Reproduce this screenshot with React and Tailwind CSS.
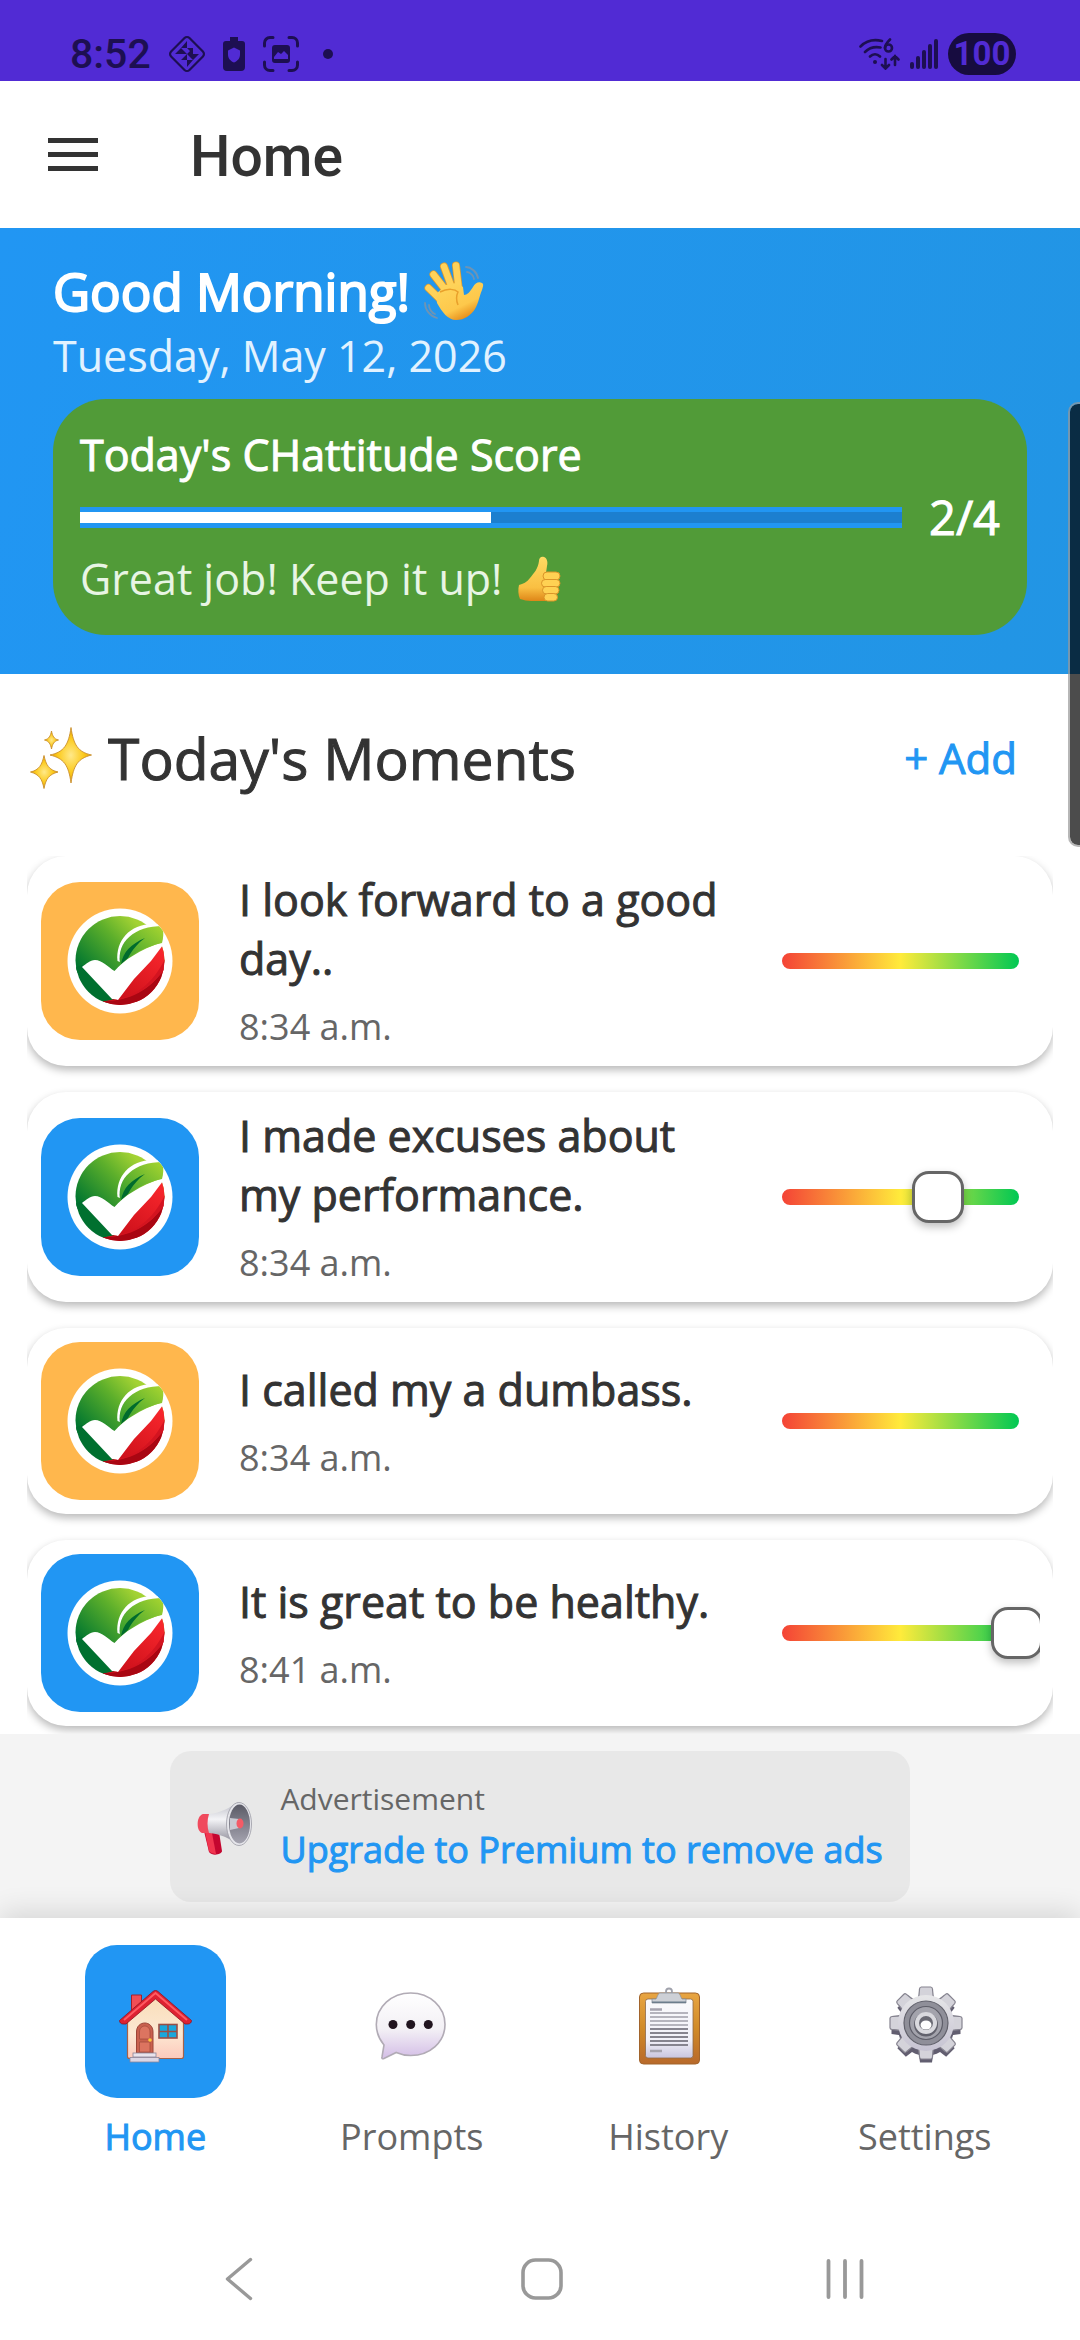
import React, { useState } from 'react';

const INITIAL_MOMENTS = [
  { id: 1, text: 'I look forward to a good day..', time: '8:34 a.m.', tile: 'bg-[#FFB74D]', rating: null },
  { id: 2, text: 'I made excuses about my performance.', time: '8:34 a.m.', tile: 'bg-[#2196F3]', rating: 66 },
  { id: 3, text: 'I called my a dumbass.', time: '8:34 a.m.', tile: 'bg-[#FFB74D]', rating: null },
  { id: 4, text: 'It is great to be healthy.', time: '8:41 a.m.', tile: 'bg-[#2196F3]', rating: 99 },
];

// --- Status bar ---

const StatusBar = () => (
  <div className="h-[81px] pt-[26px] pl-[70px] pr-16 bg-[#512BD4] flex items-center justify-between text-[#1D0F52]">
    <div className="flex items-center">
      <span className="font-['Roboto',sans-serif] font-medium text-[41px] leading-[48px]">8:52</span>
      <svg className="ml-[17px]" width="38" height="38" viewBox="0 0 38 38" fill="none" stroke="currentColor">
        <rect x="6" y="6" width="26" height="26" rx="3.500" strokeWidth="2.200" transform="rotate(45 19 19)" />
        <g fill="currentColor" stroke="none">
          <path d="M19 6v7h-6zM19 13h6v6zM13 13l6 6h-6zM7 19h6v-6zM25 13v6l-6 0zM31 19h-6v6zM19 19v6h-6zM19 25h6l-6 7zM25 19v6l-6-6z" />
        </g>
      </svg>
      <svg className="ml-[17px]" width="22" height="34" viewBox="0 0 22 34" fill="currentColor">
        <path fillRule="evenodd" d="M7 0h8v4h4a3 3 0 0 1 3 3v23a4 4 0 0 1-4 4H4a4 4 0 0 1-4-4V7a3 3 0 0 1 3-3h4zM11 10.500l-6 3v4c0 4 2.500 6.500 6 8 3.500-1.500 6-4 6-8v-4z" />
      </svg>
      <svg className="ml-[18px]" width="36" height="36" viewBox="0 0 36 36" fill="none" stroke="currentColor" strokeWidth="3">
        <path d="M1.500 10V7a5.500 5.500 0 0 1 5.500-5.500h3M26 1.500h3A5.500 5.500 0 0 1 34.500 7v3M34.500 26v3a5.500 5.500 0 0 1-5.500 5.500h-3M10 34.500H7A5.500 5.500 0 0 1 1.500 29v-3" strokeLinecap="round" />
        <path d="M12 9h12a3 3 0 0 1 3 3v12a3 3 0 0 1-3 3H12a3 3 0 0 1-3-3V12a3 3 0 0 1 3-3zm-1 14h14v-4l-4-4-3 3-3-2-4 5z" fill="currentColor" stroke="none" fillRule="evenodd" />
      </svg>
      <span className="ml-6 w-[10px] h-[10px] rounded-full bg-current" />
    </div>
    <div className="flex items-center gap-[10px]">
      <svg width="41" height="32" viewBox="0 0 41 32" fill="none" stroke="currentColor" strokeWidth="2.600" strokeLinecap="round">
        <path d="M1.500 8.500C7 3 15 1 23 3M6 14c4.500-4.500 10-5.500 15.500-4.500M11 18.500c3-3 7-3 10 0" />
        <circle cx="16" cy="24" r="2" fill="currentColor" stroke="none" />
        <path d="M31 1.500c-3 3-5 5.500-5 8.500" />
        <circle cx="29.500" cy="10" r="3.500" />
        <path d="M26.500 21v9M23 27l3.500 3.500L30 27M36 27v-9M32.500 21.500L36 18l3.500 3.500" />
      </svg>
      <svg width="28" height="32" viewBox="0 0 28 32" fill="currentColor">
        <rect x="0" y="24" width="4" height="7" rx="2" />
        <rect x="6" y="18" width="4" height="13" rx="2" />
        <rect x="12" y="12" width="4" height="19" rx="2" />
        <rect x="18" y="6" width="4" height="25" rx="2" />
        <rect x="24" y="1" width="4" height="30" rx="2" />
      </svg>
      <span className="w-[68px] h-[42px] rounded-full bg-[#170C40] text-[#512BD4] flex items-center justify-center font-['Roboto',sans-serif] font-bold text-[33px] leading-[42px]">100</span>
    </div>
  </div>
);

// --- Emoji drawings ---

const WaveIcon = () => (
  <svg width="60" height="60" viewBox="0 0 60 60" fill="none" aria-hidden="true">
    <defs>
      <linearGradient id="hand" x1="0" y1="0" x2="0.600" y2="1">
        <stop offset="0" stopColor="#FFD75E" />
        <stop offset="0.700" stopColor="#FDC84B" />
        <stop offset="1" stopColor="#E58A17" />
      </linearGradient>
    </defs>
    <g stroke="#DE9A2C" strokeWidth="8" strokeLinecap="round">
      <path d="M4.500 27L22 44M9.500 13.500L27 36M20 5.500L29 30M32 4.500L35 30" />
    </g>
    <g stroke="#FFD25A" strokeWidth="6.500" strokeLinecap="round">
      <path d="M4.500 27L22 44M9.500 13.500L27 36M20 5.500L29 30M32 4.500L35 30" />
    </g>
    <path d="M12 33L22 24l10-2 7 4 1 8c3 0 6-3 9-8 2-4 6-6 9-4 2 1 1 4 0 7-3 7-3 12-7 19-4 6-10 11-19 11-8 0-14-8-19-17z" fill="url(#hand)" />
    <path d="M16 31c8-4 15-3 18 0-2 4-2 8 0 13" stroke="#E9A02B" strokeWidth="1.500" />
    <path d="M42 6c5 0 11 5 12 11M43 11c3 0 7 4 7 7M1 42c0 7 5 13 12 15M5 44c0 4 3 8 6 9" stroke="#6E94B4" strokeWidth="1.800" strokeLinecap="round" />
  </svg>
);

const ThumbIcon = () => (
  <svg width="43" height="46" viewBox="0 0 43 46" fill="none" aria-hidden="true">
    <defs>
      <linearGradient id="thumb" x1="0" y1="0" x2="0" y2="1">
        <stop offset="0" stopColor="#FFDB63" />
        <stop offset="0.700" stopColor="#F9BF42" />
        <stop offset="1" stopColor="#DE8618" />
      </linearGradient>
    </defs>
    <path d="M1 29c4-1 8-3 11-7 4-5 8-9 9-17 0-3 2-5 5-4 3 1 4 5 3 9l-1 7 5 10-5 18H13c-4 0-7-1-11-2-2-4-2-10-1-14z" fill="url(#thumb)" />
    <g fill="#FFD153" stroke="#DB9428" strokeWidth="1">
      <rect x="25" y="16" width="17" height="8" rx="4" />
      <rect x="23.500" y="23.500" width="18.500" height="7.500" rx="3.700" />
      <rect x="24.500" y="30.500" width="16.500" height="7.500" rx="3.700" />
      <rect x="26" y="37.500" width="13.500" height="7.500" rx="3.700" />
    </g>
  </svg>
);

const SparklesIcon = () => (
  <svg width="62" height="62" viewBox="0 0 62 62" aria-hidden="true">
    <defs>
      <radialGradient id="spark">
        <stop offset="0" stopColor="#FFE98A" />
        <stop offset="0.600" stopColor="#FCCB1F" />
        <stop offset="1" stopColor="#E9A400" />
      </radialGradient>
    </defs>
    <g fill="url(#spark)" stroke="#C98E2E" strokeWidth="0.900" strokeLinejoin="round">
      <path d="M41 0.500C43.500 18 48 25 61.500 28 48 31.500 43.500 38 41 56 38.500 38 34 31.500 20 28 34 25 38.500 18 41 0.500z" />
      <path d="M14 28.500C16 38 19 43 28 45 19 47.500 16 51.500 14 61.500 12 51.500 9 47.500 0.500 45 9 43 12 38 14 28.500z" />
      <path d="M21.500 4C22.500 9 24 12 28.500 13 24 14 22.500 17 21.500 22 20.500 17 19 14 14.500 13 19 12 20.500 9 21.500 4z" />
    </g>
  </svg>
);

const MegaphoneIcon = () => (
  <svg className="shrink-0" width="56" height="56" viewBox="0 0 56 56" aria-hidden="true">
    <defs>
      <linearGradient id="cone" x1="0" y1="0" x2="0" y2="1">
        <stop offset="0" stopColor="#B9BAC4" />
        <stop offset="0.400" stopColor="#F4F4F7" />
        <stop offset="1" stopColor="#83828F" />
      </linearGradient>
      <linearGradient id="bell" x1="0" y1="0" x2="0" y2="1">
        <stop offset="0" stopColor="#5B5B66" />
        <stop offset="1" stopColor="#A5A4B0" />
      </linearGradient>
    </defs>
    <path d="M7 32l15 1 3 19c0 3-9 6-13 1z" fill="#C4062F" />
    <path d="M8 33l7 1 4 21c-2 0-6-1-7-3z" fill="#F0354F" />
    <path d="M14 15H6C-1 17-1 32 5 34h9z" fill="#F04A5D" />
    <path d="M12 15C24 14 34 8 41 3v43c-8-7-18-11-29-12-2-6-2-13 0-19z" fill="url(#cone)" />
    <ellipse cx="42" cy="25" rx="12.500" ry="21.500" fill="#E6E6EB" stroke="#9B9BA5" strokeWidth="0.800" />
    <ellipse cx="42.500" cy="25" rx="10.500" ry="19.500" fill="url(#bell)" />
    <path d="M33 19l9 1v9l-9 2z" fill="#C9CAD2" />
    <ellipse cx="43" cy="24.500" rx="3.500" ry="5" fill="#F45B66" />
  </svg>
);

const HouseIcon = () => (
  <svg width="88" height="88" viewBox="0 0 88 88" aria-hidden="true">
    <defs>
      <linearGradient id="wall" x1="0" y1="0" x2="0" y2="1">
        <stop offset="0" stopColor="#F9DDB8" />
        <stop offset="0.600" stopColor="#FCE8D2" />
        <stop offset="1" stopColor="#FDC9BC" />
      </linearGradient>
    </defs>
    <path d="M20.500 36V17h10v12" fill="#F04E56" stroke="#A3202C" strokeWidth="1" />
    <path d="M44.500 18L72.500 42v36.500a2 2 0 0 1-2 2H18.500a2 2 0 0 1-2-2V42z" fill="url(#wall)" stroke="#A5624A" strokeWidth="1.200" />
    <path d="M44.500 12.500c1 0 2 .5 2.500 1L80.500 42.500c0 2-1.500 3.500-3.500 3.500h-3L44.500 21 15 46h-3c-2 0-3.500-1.500-3.500-3.500L42 13.500c.5-.5 1.500-1 2.500-1z" fill="#DE2232" stroke="#8F1320" strokeWidth="0.800" />
    <path d="M13 42L44.500 15 76 42" fill="none" stroke="#FF5A62" strokeWidth="2" />
    <path d="M25.500 75V54c0-12 16.500-12 16.500 0v21z" fill="#C9604E" stroke="#9C4436" strokeWidth="1" />
    <path d="M28.500 61v-7c0-8 10.500-8 10.500 0v7zM28.500 64H39v10H28.500z" fill="#DC7460" stroke="#A34B3C" strokeWidth="0.800" />
    <circle cx="39" cy="62" r="1.800" fill="#FFC93C" />
    <rect x="48" y="46.500" width="18" height="13.500" fill="#1AA7DB" stroke="#9A4F45" strokeWidth="1.600" />
    <path d="M57 46.500V60M48 53.500h18" stroke="#9A4F45" strokeWidth="1.600" />
    <rect x="22" y="75" width="23" height="4" fill="#E9E3EC" stroke="#8B8498" strokeWidth="0.800" />
    <rect x="19" y="79.500" width="29" height="4.500" fill="#DCD6E4" stroke="#8B8498" strokeWidth="0.800" />
  </svg>
);

const BubbleIcon = () => (
  <svg width="88" height="88" viewBox="0 0 88 88" aria-hidden="true">
    <defs>
      <linearGradient id="bubble" x1="0" y1="0" x2="0" y2="1">
        <stop offset="0" stopColor="#FFFFFF" />
        <stop offset="0.550" stopColor="#F3F0F5" />
        <stop offset="1" stopColor="#D3BDE6" />
      </linearGradient>
    </defs>
    <path d="M42.700 15C62 15 77 29 77 46.500S62 77.500 42.700 77.500c-5.500 0-10-1-14.500-3L16 80.500c-1.500.5-2.500 0-2-1.500l2-12C11 61 8.300 54.500 8.300 46.500 8.300 29 23.500 15 42.700 15z" fill="url(#bubble)" stroke="#B1ABB5" strokeWidth="1.600" />
    <g fill="#21141F">
      <circle cx="25" cy="46.500" r="4.500" />
      <circle cx="42.700" cy="46.500" r="4.500" />
      <circle cx="60.300" cy="46.500" r="4.500" />
    </g>
  </svg>
);

const ClipboardIcon = () => (
  <svg width="88" height="88" viewBox="0 0 88 88" aria-hidden="true">
    <defs>
      <linearGradient id="board" x1="0" y1="0" x2="0" y2="1">
        <stop offset="0" stopColor="#E8A542" />
        <stop offset="0.500" stopColor="#D08A28" />
        <stop offset="1" stopColor="#B8692B" />
      </linearGradient>
      <linearGradient id="sheet" x1="0" y1="0" x2="0" y2="1">
        <stop offset="0" stopColor="#FAFAFC" />
        <stop offset="0.700" stopColor="#F1F0F8" />
        <stop offset="1" stopColor="#C9C5DE" />
      </linearGradient>
    </defs>
    <rect x="15.500" y="15" width="60" height="71" rx="4" fill="url(#board)" stroke="#A2642B" strokeWidth="1" />
    <rect x="21.500" y="21" width="47.500" height="59" rx="2.500" fill="url(#sheet)" stroke="#8D6A4A" strokeWidth="0.800" />
    <path d="M26 31.500h12M26 73h12" stroke="#A5A3AE" strokeWidth="2.400" />
    <path d="M26 35h38M26 39h38M26 43h38M26 47h38" stroke="#B5B4BD" strokeWidth="2" />
    <path d="M26 51h38M26 55h38M26 59h38M26 63h38M26 67h38" stroke="#86848F" strokeWidth="2.200" />
    <circle cx="45" cy="13.500" r="3" fill="none" stroke="#A0A2AC" strokeWidth="1.800" />
    <path d="M36 15h18c2 0 3 5 4 6h4v4H28v-4h4c1-1 2-6 4-6z" fill="#CDD0D6" stroke="#8C929C" strokeWidth="0.800" />
    <path d="M28 24.200h34" stroke="#6C7D8C" strokeWidth="1.600" />
  </svg>
);

const TEETH = [0, 45, 90, 135, 180, 225, 270, 315];

const GearIcon = () => (
  <svg width="88" height="88" viewBox="0 0 88 88" aria-hidden="true">
    <defs>
      <linearGradient id="gear" x1="0" y1="0" x2="0" y2="1">
        <stop offset="0" stopColor="#E6E6E8" />
        <stop offset="1" stopColor="#C6C3D2" />
      </linearGradient>
    </defs>
    <g fill="#625E70">
      <circle cx="45" cy="50" r="28" />
      {TEETH.map((a) => <path key={a} d="M37 30l2-14.500h12L53 30z" transform={`rotate(${a} 45 50)`} />)}
    </g>
    <g fill="#D4D3DA" stroke="#85838F" strokeWidth="1.200" strokeLinejoin="round">
      {TEETH.map((a) => <path key={a} d="M35 25c3-4 3-7 3.500-14 .2-1.500.8-2 1.800-2h9.400c1 0 1.600.5 1.800 2 .5 7 .5 10 3.500 14z" transform={`rotate(${a} 45 45)`} />)}
    </g>
    <circle cx="45" cy="45" r="28" fill="url(#gear)" />
    <circle cx="45" cy="45" r="22" fill="#8F8F99" stroke="#62626C" strokeWidth="1.200" />
    <circle cx="45" cy="45" r="16.500" fill="#A3A3AC" stroke="#5E5E69" strokeWidth="1.200" />
    <circle cx="45" cy="46.500" r="12" fill="#62626D" />
    <circle cx="45" cy="45" r="11" fill="#D9D9DE" />
    <circle cx="45" cy="45" r="7" fill="#6A6A74" />
    <ellipse cx="45" cy="47" rx="5.500" ry="4.500" fill="#FFFFFF" />
  </svg>
);

// Round check mark badge: green leaf on one side, red on the other
const LogoBadge = () => (
  <svg width="106" height="106" viewBox="0 0 106 106" aria-hidden="true">
    <defs>
      <linearGradient id="leafBg" x1="0" y1="0.700" x2="0.900" y2="0.100">
        <stop offset="0" stopColor="#00762F" />
        <stop offset="0.500" stopColor="#5DAF2B" />
        <stop offset="0.800" stopColor="#A3D233" />
      </linearGradient>
      <linearGradient id="leafFg" x1="0" y1="1" x2="1" y2="0">
        <stop offset="0" stopColor="#2F9A2E" />
        <stop offset="1" stopColor="#A9D630" />
      </linearGradient>
      <linearGradient id="redSide" x1="0.900" y1="0" x2="0.300" y2="1">
        <stop offset="0" stopColor="#FF2A2F" />
        <stop offset="1" stopColor="#C60D18" />
      </linearGradient>
      <clipPath id="disc"><circle cx="53" cy="52.500" r="44.500" /></clipPath>
      <clipPath id="rim"><circle cx="53" cy="53" r="52.500" /></clipPath>
    </defs>
    <circle cx="53" cy="53" r="52.500" fill="#FFFFFF" />
    <g clipPath="url(#disc)">
      <path d="M4 4h96v50L47 70 4 64z" fill="url(#leafBg)" />
      <path d="M4 60l12-3 33 35-6 3-14 3L4 80z" fill="#00702F" />
      <path d="M98 34L67 70 49 91l-13 3 16 10h50V30z" fill="url(#redSide)" />
      <path d="M36 93c27 0 50-11 64-38v45H40z" fill="#A90612" />
      <path d="M49 91c18-2 36-14 49-40v10C84 80 62 93 38 93z" fill="#D31420" />
    </g>
    <g clipPath="url(#rim)">
      <path d="M15 59c4-3 8-7 13-7 7 0 13 7 19.500 11C57 52 72 42 96 34v3L84 53 67 71 51 92c-2-1-4-1-6-1z" fill="#FFFFFF" />
      <path d="M50.500 53c-2-20 12-37 35.500-37h14v5c-30-3-48 12-47 33z" fill="#FFFFFF" />
      <path d="M53 55c-3-21 14-37 43-37 .5 7 .5 12-1 17-17 4-28 10-38 18z" fill="url(#leafFg)" />
      <path d="M54 56c2-12 10-20 24-26-7 5-13 12-17 20z" fill="#006B2D" />
    </g>
  </svg>
);

// --- Page pieces ---

const Header = () => (
  <header className="px-[53px] pt-[27px] pb-[39px] text-white bg-[linear-gradient(105deg,#2196F3,#2295E4)]">
    <div className="flex items-center gap-[14px]">
      <h2 className="text-[51px] leading-[72px] [-webkit-text-stroke:2px]">Good Morning!</h2>
      <WaveIcon />
    </div>
    <p className="text-[43px] leading-[58px] text-[#E1F2FF]">Tuesday, May 12, 2026</p>
    <section className="mt-[14px] p-[27px] rounded-[53px] bg-[#519B38]">
      <h3 className="text-[43px] leading-[58px] [-webkit-text-stroke:1px]">Today's CHattitude Score</h3>
      <div className="flex items-center gap-[27px]">
        <div
          role="progressbar"
          aria-label="Today's CHattitude Score"
          aria-valuemin={0}
          aria-valuemax={4}
          aria-valuenow={2}
          className="flex-1 py-[5px] bg-[#2196F3]"
        >
          <div className="h-[11px] bg-[#1C7FCF]">
            <div className="w-1/2 h-full bg-white" />
          </div>
        </div>
        <span className="text-[47px] leading-[66px] [-webkit-text-stroke:1px]">2/4</span>
      </div>
      <div className="flex items-center gap-4">
        <p className="text-[43px] leading-[58px] text-[#E8F5E4]">Great job! Keep it up!</p>
        <ThumbIcon />
      </div>
    </section>
  </header>
);

const MomentSlider = ({ moment, onRate }) => {
  const thumb = moment.rating === null ? '[&::-webkit-slider-thumb]:opacity-0' : '';
  return (
    <div className="w-[284px] shrink-0 self-stretch pl-[26px] flex items-center overflow-hidden">
      <div className="relative w-[237px] h-4 shrink-0 rounded-full bg-[linear-gradient(90deg,#F44336,#FFEB3B_50%,#00C853)]">
        <input
          type="range"
          aria-label={`Rate: ${moment.text}`}
          min="0"
          max="100"
          value={moment.rating ?? 50}
          onChange={(e) => onRate(moment.id, Number(e.target.value))}
          className={`absolute -left-[26px] -top-[18px] w-[289px] h-[52px] appearance-none bg-transparent [&::-webkit-slider-thumb]:appearance-none [&::-webkit-slider-thumb]:box-border [&::-webkit-slider-thumb]:w-[52px] [&::-webkit-slider-thumb]:h-[52px] [&::-webkit-slider-thumb]:rounded-[17px] [&::-webkit-slider-thumb]:border-[3px] [&::-webkit-slider-thumb]:border-solid [&::-webkit-slider-thumb]:border-[#666666] [&::-webkit-slider-thumb]:bg-white [&::-webkit-slider-thumb]:shadow-[0_4px_8px_rgba(0,0,0,0.25)] ${thumb}`}
        />
      </div>
    </div>
  );
};

const MomentCard = ({ moment, onRate }) => (
  <li className="flex items-center py-[14px] pl-[14px] pr-[13px] rounded-[39px] bg-white shadow-[0_4px_8px_rgba(0,0,0,0.28)]">
    <div className={`w-[158px] h-[158px] shrink-0 rounded-[39px] flex items-center justify-center ${moment.tile}`}>
      <LogoBadge />
    </div>
    <div className="flex-1 ml-10 mr-6">
      <p className="text-[43px] leading-[59px] text-[#333333] [-webkit-text-stroke:1px]">{moment.text}</p>
      <p className="mt-[14px] text-[36px] leading-[50px] text-[#666666]">{moment.time}</p>
    </div>
    <MomentSlider moment={moment} onRate={onRate} />
  </li>
);

const AdBanner = () => (
  <aside className="pt-[17px] pb-4 bg-[#F4F4F4] flex justify-center">
    <div className="px-[27px] py-7 rounded-[21px] bg-[#E8E8E8] flex items-center gap-[27px]">
      <MegaphoneIcon />
      <div className="flex flex-col gap-[6px]">
        <span className="text-[30px] leading-[40px] text-[#666666]">Advertisement</span>
        <a href="#premium" className="text-[36px] leading-[49px] text-[#2196F3] [-webkit-text-stroke:1px]">Upgrade to Premium to remove ads</a>
      </div>
    </div>
  </aside>
);

const TABS = [
  { name: 'Home', icon: HouseIcon },
  { name: 'Prompts', icon: BubbleIcon },
  { name: 'History', icon: ClipboardIcon },
  { name: 'Settings', icon: GearIcon },
];

const TabBar = ({ active, onSelect }) => (
  <nav className="relative px-[27px] pt-[27px] grid grid-cols-4 bg-white shadow-[0_-6px_26px_rgba(0,0,0,0.12)]">
    {TABS.map(({ name, icon: Icon }) => (
      <button key={name} type="button" onClick={() => onSelect(name)} className="flex flex-col items-center gap-[14px]">
        <span className={`w-[141px] h-[153px] rounded-[32px] flex items-center justify-center ${active === name ? 'bg-[#2196F3]' : ''}`}>
          <Icon />
        </span>
        <span className={`text-[36px] leading-[49px] ${active === name ? 'text-[#2196F3] [-webkit-text-stroke:1px]' : 'text-[#666666]'}`}>{name}</span>
      </button>
    ))}
  </nav>
);

const SystemNav = () => (
  <div className="relative flex-1 flex flex-col justify-end bg-white text-[#999999]">
    <div className="h-[122px] pl-[88px] pr-[84px] grid grid-cols-3 items-center justify-items-center">
      <button type="button" aria-label="Back">
        <svg width="28" height="44" viewBox="0 0 28 44" fill="none" stroke="currentColor" strokeWidth="3.400" strokeLinecap="round" strokeLinejoin="round">
          <path d="M25.500 2.500L2.500 22l23 19.500" />
        </svg>
      </button>
      <button type="button" aria-label="Home screen">
        <svg width="44" height="44" viewBox="0 0 44 44" fill="none" stroke="currentColor" strokeWidth="3.600">
          <rect x="3" y="3" width="38" height="38" rx="12.500" />
        </svg>
      </button>
      <button type="button" aria-label="Recent apps">
        <svg width="38" height="44" viewBox="0 0 38 44" fill="none" stroke="currentColor" strokeWidth="3.800" strokeLinecap="round">
          <path d="M2.500 4v36M19 4v36M35.500 4v36" />
        </svg>
      </button>
    </div>
  </div>
);

// --- Main App ---

export default function App() {
  const [moments, setMoments] = useState(INITIAL_MOMENTS);
  const [tab, setTab] = useState('Home');

  const handleRate = (id, rating) => {
    setMoments((prev) => prev.map((m) => (m.id === id ? { ...m, rating } : m)));
  };

  return (
    <div className="relative min-h-screen flex flex-col overflow-hidden bg-white font-['Open_Sans',sans-serif]">
      <StatusBar />

      <div className="h-[147px] pl-12 flex items-center gap-[92px] text-[#333333]">
        <button type="button" aria-label="Open menu" className="flex flex-col gap-[9px]">
          <span className="w-[50px] h-[5px] bg-current" />
          <span className="w-[50px] h-[5px] bg-current" />
          <span className="w-[50px] h-[5px] bg-current" />
        </button>
        <h1 className="pt-1 font-['Roboto',sans-serif] font-medium text-[57px] leading-[68px]">Home</h1>
      </div>

      <Header />

      <main className="px-[27px]">
        <div className="pt-11 pb-[58px] pl-[3px] pr-9 flex items-center justify-between">
          <div className="flex items-center gap-4">
            <SparklesIcon />
            <h2 className="text-[57px] leading-[80px] text-[#333333] [-webkit-text-stroke:1px]">Today's Moments</h2>
          </div>
          <button type="button" className="text-[42px] leading-[58px] text-[#2196F3] [-webkit-text-stroke:1px]">+ Add</button>
        </div>
        <ul className="flex flex-col gap-[26px] pb-2 overflow-clip">
          {moments.map((m) => <MomentCard key={m.id} moment={m} onRate={handleRate} />)}
        </ul>
      </main>

      <AdBanner />
      <TabBar active={tab} onSelect={setTab} />
      <SystemNav />

      {/* Edge panel handle, half off screen */}
      <div className="absolute -right-3 top-[402px] w-6 h-[445px] rounded-[10px] border-2 border-[#999999]/70 bg-black/70 bg-clip-padding" />
    </div>
  );
}
